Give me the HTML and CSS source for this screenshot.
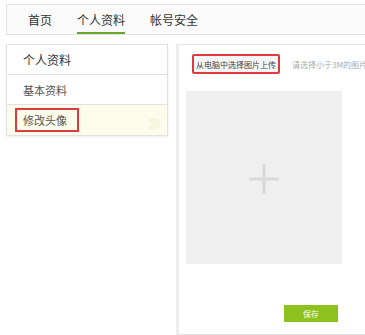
FILE: index.html
```html
<!DOCTYPE html>
<html lang="zh-CN">
<head>
  <meta charset="UTF-8">
  <title>个人资料</title>
  <link rel="stylesheet" href="styles.css">
</head>
<body>
  <div class="tabs">
    <a class="tab">首页</a>
    <a class="tab active">个人资料</a>
    <a class="tab">帐号安全</a>
  </div>

  <div class="main">
    <div class="side">
      <div class="side-title">个人资料</div>
      <div class="side-item">基本资料</div>
      <div class="side-item current"><span class="mark">修改头像</span><span class="arrows">&#8250;&#8250;&#8250;</span></div>
    </div>

    <div class="content">
      <div class="upload-row">
        <button class="upload-btn">从电脑中选择图片上传</button>
        <span class="hint">请选择小于3M的图片</span>
      </div>
      <div class="preview">
        <svg width="30" height="30" viewBox="0 0 30 30">
          <rect x="13.5" y="0" width="3" height="30" fill="#d9d9d9"/>
          <rect x="0" y="13.5" width="30" height="3" fill="#d9d9d9"/>
        </svg>
      </div>
      <div class="actions">
        <button class="save-btn">保存</button>
      </div>
    </div>
  </div>
</body>
</html>
```

FILE: styles.css
```css
body {
  margin: 0;
  padding: 4px 0 0 6px;
  font-family: "Noto Sans CJK SC", "Noto Sans", sans-serif;
  background-color: #fff;
  color: #333;
  overflow: hidden;
}

.tabs {
  display: flex;
  height: 29px;
  padding-left: 21px;
  border: 1px solid #e2e2e2;
  border-right: none;
  background-color: #fafafa;
}

.tab {
  display: flex;
  align-items: center;
  font-size: 12px;
  line-height: 12px;
  margin-right: 25px;
  color: #333;
  border-bottom: 2px solid transparent;
  padding-top: 2px;
}

.tab.active {
  border-bottom-color: #6aa42a;
}

.main {
  display: flex;
  margin-top: 9px;
  align-items: flex-start;
}

.side {
  flex-shrink: 0;
  width: 160px;
  border: 1px solid #e2e2e2;
  box-shadow: 0 1px 2px rgba(0, 0, 0, 0.08);
}

.side-title,
.side-item {
  height: 29px;
  display: flex;
  align-items: center;
  padding-left: 16px;
  border-bottom: 1px solid #e2e2e2;
}

.side-title {
  font-size: 12px;
}

.side-item {
  font-size: 11px;
  color: #555;
}

.side-item.current {
  border-bottom: none;
  height: 30px;
  padding-left: 8px;
  background-color: #fbfce9;
  justify-content: space-between;
}

.mark {
  display: flex;
  align-items: center;
  height: 20px;
  width: 54px;
  padding-left: 6px;
  border: 2px solid #dc3a3f;
}

.arrows {
  font-size: 28px;
  line-height: 20px;
  letter-spacing: -5px;
  color: #f2f3dc;
  margin-right: 10px;
}

.content {
  flex-shrink: 0;
  margin-left: 8px;
  width: 200px;
  height: 280px;
  padding: 9px 0 0 7px;
  border-top: 1px solid #e8e8e8;
  border-bottom: 1px solid #e2e2e2;
  border-left: 3px solid #ececec;
}

.upload-row {
  display: flex;
  align-items: center;
  margin-left: 6px;
  white-space: nowrap;
}

.upload-btn {
  height: 20px;
  width: 88px;
  padding: 0;
  font-family: inherit;
  font-size: 8px;
  color: #444;
  background-color: #f5f5f5;
  border: 2px solid #dc3a3f;
  border-radius: 2px;
}

.hint {
  margin-left: 12px;
  font-size: 8px;
  color: #aaa;
}

.preview {
  display: flex;
  justify-content: center;
  align-items: center;
  width: 156px;
  height: 171px;
  margin-top: 17px;
  padding-top: 2px;
  background-color: #efefef;
}

.actions {
  display: flex;
  justify-content: flex-end;
  width: 152px;
  margin-top: 41px;
}

.save-btn {
  width: 54px;
  height: 17px;
  padding: 0;
  border: none;
  background-color: #8cc11e;
  color: #fff;
  font-family: inherit;
  font-size: 8px;
}
```
